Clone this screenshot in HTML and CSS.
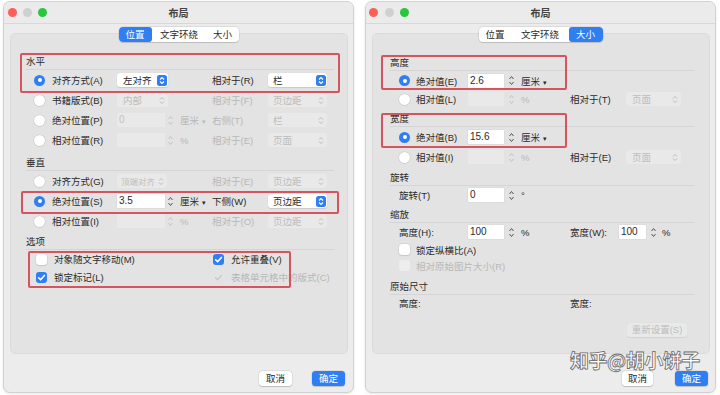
FILE: index.html
```html
<!DOCTYPE html>
<html lang="zh">
<head>
<meta charset="utf-8">
<link rel="stylesheet" href="styles.css">
</head>
<body>
<div class="desk">
  <!-- LEFT WINDOW -->
  <div class="win L">
    <div class="titlebar">
      <div class="lights"><span class="light red"></span><span class="light gray"></span><span class="light green"></span></div>
      <div class="title">布局</div>
      <div></div>
    </div>
    <div class="tabs-wrap">
      <div class="tabs"><span class="tab w33 on">位置</span><span class="tab w55">文字环绕</span><span class="tab w32">大小</span></div>
    </div>
    <div class="panel">
      <div class="hl hl-l1">
        <div class="sec">水平</div>
        <div class="row">
          <span class="radio on"></span><span>对齐方式(A)</span>
          <span class="sel"><span>左对齐</span><i class="sb"><svg width="10" height="11" viewBox="0 0 10 11"><path d="M3 4.5 5 2.5 7 4.5M3 6.5 5 8.5 7 6.5" fill="none" stroke="#fff" stroke-width="1.1"/></svg></i></span>
          <span></span>
          <span>相对于(R)</span>
          <span class="sel w59"><span>栏</span><i class="sb"><svg width="10" height="11" viewBox="0 0 10 11"><path d="M3 4.5 5 2.5 7 4.5M3 6.5 5 8.5 7 6.5" fill="none" stroke="#fff" stroke-width="1.1"/></svg></i></span>
        </div>
      </div>
      <div class="row">
        <span class="radio"></span><span>书籍版式(B)</span>
        <span class="sel dis"><span>内部</span><i class="sb"><svg width="10" height="11" viewBox="0 0 10 11"><path d="M3 4.5 5 2.5 7 4.5M3 6.5 5 8.5 7 6.5" fill="none" stroke="#bcbcbc" stroke-width="1"/></svg></i></span>
        <span></span>
        <span class="dis">相对于(F)</span>
        <span class="sel w59 dis"><span>页边距</span><i class="sb"><svg width="10" height="11" viewBox="0 0 10 11"><path d="M3 4.5 5 2.5 7 4.5M3 6.5 5 8.5 7 6.5" fill="none" stroke="#bcbcbc" stroke-width="1"/></svg></i></span>
      </div>
      <div class="row">
        <span class="radio"></span><span>绝对位置(P)</span>
        <span class="ctl"><span class="inp dis">0</span><svg class="step" width="7" height="13" viewBox="0 0 7 13"><path d="M1.5 5 3.5 2.5 5.5 5M1.5 8 3.5 10.5 5.5 8" fill="none" stroke="#c4c4c4" stroke-width="1"/></svg></span>
        <span class="dis">厘米 <small>▾</small></span>
        <span class="dis">右侧(T)</span>
        <span class="sel w59 dis"><span>栏</span><i class="sb"><svg width="10" height="11" viewBox="0 0 10 11"><path d="M3 4.5 5 2.5 7 4.5M3 6.5 5 8.5 7 6.5" fill="none" stroke="#bcbcbc" stroke-width="1"/></svg></i></span>
      </div>
      <div class="row">
        <span class="radio"></span><span>相对位置(R)</span>
        <span class="ctl"><span class="inp dis"></span><svg class="step" width="7" height="13" viewBox="0 0 7 13"><path d="M1.5 5 3.5 2.5 5.5 5M1.5 8 3.5 10.5 5.5 8" fill="none" stroke="#c4c4c4" stroke-width="1"/></svg></span>
        <span class="dis">%</span>
        <span class="dis">相对于(E)</span>
        <span class="sel w59 dis"><span>页面</span><i class="sb"><svg width="10" height="11" viewBox="0 0 10 11"><path d="M3 4.5 5 2.5 7 4.5M3 6.5 5 8.5 7 6.5" fill="none" stroke="#bcbcbc" stroke-width="1"/></svg></i></span>
      </div>

      <div class="sec mt6">垂直</div>
      <div class="row">
        <span class="radio"></span><span>对齐方式(G)</span>
        <span class="sel dis w50"><span class="fit">顶端对齐</span><i class="sb"><svg width="10" height="11" viewBox="0 0 10 11"><path d="M3 4.5 5 2.5 7 4.5M3 6.5 5 8.5 7 6.5" fill="none" stroke="#bcbcbc" stroke-width="1"/></svg></i></span>
        <span></span>
        <span class="dis">相对于(E)</span>
        <span class="sel w59 dis"><span>页边距</span><i class="sb"><svg width="10" height="11" viewBox="0 0 10 11"><path d="M3 4.5 5 2.5 7 4.5M3 6.5 5 8.5 7 6.5" fill="none" stroke="#bcbcbc" stroke-width="1"/></svg></i></span>
      </div>
      <div class="row hl hl-l2">
        <span class="radio on"></span><span>绝对位置(S)</span>
        <span class="ctl"><span class="inp">3.5</span><svg class="step" width="7" height="13" viewBox="0 0 7 13"><path d="M1.5 5 3.5 2.5 5.5 5M1.5 8 3.5 10.5 5.5 8" fill="none" stroke="#555" stroke-width="1"/></svg></span>
        <span>厘米 <small>▾</small></span>
        <span>下侧(W)</span>
        <span class="sel w59"><span>页边距</span><i class="sb"><svg width="10" height="11" viewBox="0 0 10 11"><path d="M3 4.5 5 2.5 7 4.5M3 6.5 5 8.5 7 6.5" fill="none" stroke="#fff" stroke-width="1.1"/></svg></i></span>
      </div>
      <div class="row">
        <span class="radio"></span><span>相对位置(I)</span>
        <span class="ctl"><span class="inp dis"></span><svg class="step" width="7" height="13" viewBox="0 0 7 13"><path d="M1.5 5 3.5 2.5 5.5 5M1.5 8 3.5 10.5 5.5 8" fill="none" stroke="#c4c4c4" stroke-width="1"/></svg></span>
        <span class="dis">%</span>
        <span class="dis">相对于(O)</span>
        <span class="sel w59 dis"><span>页边距</span><i class="sb"><svg width="10" height="11" viewBox="0 0 10 11"><path d="M3 4.5 5 2.5 7 4.5M3 6.5 5 8.5 7 6.5" fill="none" stroke="#bcbcbc" stroke-width="1"/></svg></i></span>
      </div>

      <div class="sec mt4">选项</div>
      <div class="opts hl hl-l3">
        <label class="ck"><span class="cb"></span>对象随文字移动(M)</label>
        <label class="ck"><span class="cb on"><svg width="11" height="11" viewBox="0 0 11 11"><path d="M2.6 5.8 4.6 7.8 8.4 3.4" fill="none" stroke="#fff" stroke-width="1.6" stroke-linecap="round" stroke-linejoin="round"/></svg></span>允许重叠(V)</label>
        <label class="ck"><span class="cb on"><svg width="11" height="11" viewBox="0 0 11 11"><path d="M2.6 5.8 4.6 7.8 8.4 3.4" fill="none" stroke="#fff" stroke-width="1.6" stroke-linecap="round" stroke-linejoin="round"/></svg></span>锁定标记(L)</label>
        <label class="ck dis"><span class="cb ghost"><svg width="11" height="11" viewBox="0 0 11 11"><path d="M2.6 5.8 4.6 7.8 8.4 3.4" fill="none" stroke="#c8c8c8" stroke-width="1.3" stroke-linecap="round" stroke-linejoin="round"/></svg></span>表格单元格中的版式(C)</label>
      </div>
    </div>
    <div class="footer">
      <span class="btn">取消</span><span class="btn primary">确定</span>
    </div>
  </div>

  <!-- RIGHT WINDOW -->
  <div class="win R">
    <div class="titlebar">
      <div class="lights"><span class="light red"></span><span class="light gray"></span><span class="light green"></span></div>
      <div class="title">布局</div>
      <div></div>
    </div>
    <div class="tabs-wrap">
      <div class="tabs"><span class="tab w33">位置</span><span class="tab w57">文字环绕</span><span class="tab w34 on">大小</span></div>
    </div>
    <div class="panel">
      <div class="hl hl-r1">
        <div class="sec">高度</div>
        <div class="row r19">
          <span class="radio on"></span><span>绝对值(E)</span>
          <span class="ctl"><span class="inp">2.6</span><svg class="step" width="7" height="13" viewBox="0 0 7 13"><path d="M1.5 5 3.5 2.5 5.5 5M1.5 8 3.5 10.5 5.5 8" fill="none" stroke="#555" stroke-width="1"/></svg></span>
          <span>厘米 <small>▾</small></span>
          <span></span><span></span>
        </div>
      </div>
      <div class="row r18">
        <span class="radio"></span><span>相对值(L)</span>
        <span class="ctl"><span class="inp dis"></span><svg class="step" width="7" height="13" viewBox="0 0 7 13"><path d="M1.5 5 3.5 2.5 5.5 5M1.5 8 3.5 10.5 5.5 8" fill="none" stroke="#c4c4c4" stroke-width="1"/></svg></span>
        <span class="dis">%</span>
        <span>相对于(T)</span>
        <span class="sel w55 dis"><span>页面</span><i class="sb"><svg width="10" height="11" viewBox="0 0 10 11"><path d="M3 4.5 5 2.5 7 4.5M3 6.5 5 8.5 7 6.5" fill="none" stroke="#bcbcbc" stroke-width="1"/></svg></i></span>
      </div>
      <div class="hl hl-r2 mt3">
        <div class="sec">宽度</div>
        <div class="row">
          <span class="radio on"></span><span>绝对值(B)</span>
          <span class="ctl"><span class="inp">15.6</span><svg class="step" width="7" height="13" viewBox="0 0 7 13"><path d="M1.5 5 3.5 2.5 5.5 5M1.5 8 3.5 10.5 5.5 8" fill="none" stroke="#555" stroke-width="1"/></svg></span>
          <span>厘米 <small>▾</small></span>
          <span></span><span></span>
        </div>
      </div>
      <div class="row">
        <span class="radio"></span><span>相对值(I)</span>
        <span class="ctl"><span class="inp dis"></span><svg class="step" width="7" height="13" viewBox="0 0 7 13"><path d="M1.5 5 3.5 2.5 5.5 5M1.5 8 3.5 10.5 5.5 8" fill="none" stroke="#c4c4c4" stroke-width="1"/></svg></span>
        <span class="dis">%</span>
        <span>相对于(E)</span>
        <span class="sel w55 dis"><span>页面</span><i class="sb"><svg width="10" height="11" viewBox="0 0 10 11"><path d="M3 4.5 5 2.5 7 4.5M3 6.5 5 8.5 7 6.5" fill="none" stroke="#bcbcbc" stroke-width="1"/></svg></i></span>
      </div>

      <div class="sec mt3">旋转</div>
      <div class="row r18">
        <span class="span2">旋转(T)</span>
        <span class="ctl"><span class="inp">0</span><svg class="step" width="7" height="13" viewBox="0 0 7 13"><path d="M1.5 5 3.5 2.5 5.5 5M1.5 8 3.5 10.5 5.5 8" fill="none" stroke="#555" stroke-width="1"/></svg></span>
        <span>°</span>
        <span></span><span></span>
      </div>

      <div class="sec mt3">缩放</div>
      <div class="row r18">
        <span class="span2">高度(H):</span>
        <span class="ctl"><span class="inp">100</span><svg class="step" width="7" height="13" viewBox="0 0 7 13"><path d="M1.5 5 3.5 2.5 5.5 5M1.5 8 3.5 10.5 5.5 8" fill="none" stroke="#555" stroke-width="1"/></svg></span>
        <span>%</span>
        <span class="span2 pair"><span class="plbl">宽度(W):</span><span class="inp w27">100</span><svg class="step" width="7" height="13" viewBox="0 0 7 13"><path d="M1.5 5 3.5 2.5 5.5 5M1.5 8 3.5 10.5 5.5 8" fill="none" stroke="#555" stroke-width="1"/></svg><span class="pct">%</span></span>
      </div>
      <div class="row r17">
        <span class="cb"></span><span class="span5">锁定纵横比(A)</span>
      </div>
      <div class="row r15">
        <span class="cb faint"></span><span class="span5 dis">相对原始图片大小(R)</span>
      </div>

      <div class="sec mt7 lh14">原始尺寸</div>
      <div class="row r16">
        <span class="span2">高度:</span><span></span><span></span>
        <span class="span2">宽度:</span>
      </div>
      <div class="reset-row"><span class="btn-dis">重新设置(S)</span></div>
    </div>
    <div class="footer">
      <span class="btn">取消</span><span class="btn primary">确定</span>
    </div>
  </div>
</div>
<div class="watermark">知乎@胡小饼子</div>
</body>
</html>
```
FILE: styles.css
```css
* { box-sizing: border-box; }
html, body { margin: 0; padding: 0; }
body {
  width: 720px;
  height: 395px;
  overflow: hidden;
  position: relative;
  background: #ffffff;
  font-family: "Liberation Sans", "Noto Sans CJK SC", sans-serif;
  font-size: 9.5px;
  color: #2a2a2a;
}
.desk { display: flex; gap: 11px; padding: 1px 0 0 3px; }

.win {
  width: 351px;
  height: 392px;
  background: #ececec;
  border: 1px solid #d2d2d2;
  border-radius: 7px;
  box-shadow: 0 1px 3px rgba(0,0,0,0.10);
  display: flex;
  flex-direction: column;
  overflow: hidden;
}
.titlebar {
  height: 22px;
  flex: none;
  display: grid;
  grid-template-columns: 1fr auto 1fr;
  align-items: center;
  border-bottom: 1px solid #d8d8d8;
  background: #ebebeb;
}
.lights { display: flex; gap: 6px; padding-left: 4px; }
.R .lights { padding-left: 3px; gap: 6.5px; }
.light { width: 9px; height: 9px; border-radius: 50%; }
.light.red { background: #fd5e57; }
.light.gray { background: #d0d0d0; }
.light.green { background: #2bc641; }
.title { font-size: 10px; font-weight: bold; color: #444; }

.tabs-wrap {
  display: flex;
  justify-content: center;
  margin-top: 3px;
  margin-bottom: -9px;
  position: relative;
  z-index: 1;
  height: 15px;
}
.tabs {
  display: flex;
  background: #fff;
  border-radius: 4px;
  box-shadow: 0 0 0 0.5px rgba(0,0,0,0.12), 0 0.5px 1px rgba(0,0,0,0.12);
  overflow: hidden;
}
.tab { line-height: 15px; text-align: center; color: #2a2a2a; }
.tab.on { background: #2f7ff2; color: #fff; border-radius: 3px; }
.w32 { width: 32px; } .w33 { width: 33px; } .w34 { width: 34px; }
.w55 { width: 55px; } .w57 { width: 57px; }

.panel {
  flex: none;
  height: 321px;
  margin: 0 5px 0 6px;
  background: #e3e3e3;
  border: 1px solid #dbdbdb;
  border-radius: 5px;
  padding: 21px 7px 0 11px;
}
.R .panel { padding: 21px 15px 0 10px; }

.sec {
  line-height: 14px;
  border-bottom: 1px solid #d5d5d5;
  margin: 0 6px 0 4px;
  color: #2a2a2a;
}
.R .sec { line-height: 15px; margin: 0 0 0 7px; }
.R .sec.lh14 { line-height: 14px; }
.mt3 { margin-top: 3px !important; }
.mt4 { margin-top: 4px !important; }
.mt6 { margin-top: 6px !important; }
.mt7 { margin-top: 7px !important; }

.row {
  display: grid;
  align-items: center;
  height: 20px;
  white-space: nowrap;
}
.L .row { grid-template-columns: 18px 65px 63px 32px 56px 59px; padding-left: 12px; }
.R .row { grid-template-columns: 17px 53px 52px 49px 56px 55px; padding-left: 16px; }
.R .row.r19 { height: 19px; }
.R .row.r18 { height: 18px; }
.R .row.r17 { height: 17px; }
.R .row.r16 { height: 16px; }
.R .row.r15 { height: 15px; }
.span2 { grid-column: span 2; }
.span5 { grid-column: span 5; }
small { font-size: 7px; }

.dis { color: #b8b8b8; }

/* highlight boxes (overlays) */
.hl { position: relative; }
.hl::after {
  content: "";
  position: absolute;
  border: 2px solid #d4545f;
  border-radius: 2px;
  pointer-events: none;
}
.hl-l1::after { top: -2px; bottom: -3px; left: -2px; right: 0; }
.hl-l2::after { top: 0; bottom: -3px; left: -1px; right: 1px; }
.hl-l3::after { top: 1px; bottom: -2px; left: 6px; width: 259px; }
.hl-r1::after { top: 0; bottom: 0; left: -2px; width: 182px; }
.hl-r2::after { top: 2px; bottom: -1px; left: -2px; width: 182px; }

/* radio */
.radio {
  width: 11px; height: 11px; border-radius: 50%;
  background: #fff;
  box-shadow: 0 0 0 0.5px rgba(0,0,0,0.12), 0 0.5px 1px rgba(0,0,0,0.1);
  display: flex; align-items: center; justify-content: center;
}
.radio.on { background: #2f7ff2; box-shadow: none; }
.radio.on::after { content: ""; width: 4px; height: 4px; border-radius: 50%; background: #fff; }

/* checkbox */
.cb {
  width: 11px; height: 11px; border-radius: 3px; flex: none;
  background: #fff;
  box-shadow: 0 0 0 0.5px rgba(0,0,0,0.1), 0 0.5px 1px rgba(0,0,0,0.08);
  display: flex;
}
.cb.on { background: #2f7ff2; box-shadow: none; }
.cb.ghost { background: transparent; box-shadow: none; }
.cb.faint { background: #ededed; box-shadow: none; }

/* inputs & selects */
.ctl { display: flex; align-items: center; gap: 2px; }
.R .ctl { gap: 4px; margin-left: -1px; }
.inp {
  width: 48px; height: 14px; line-height: 14px;
  background: #fff; border-radius: 1px;
  padding-left: 2px;
  box-shadow: 0 0 0 0.5px rgba(0,0,0,0.06);
  color: #2a2a2a;
  font-size: 10px;
}
.R .inp { width: 36px; }
.R .inp.w27 { width: 27px; }
.inp.dis { background: #e9e9e9; color: #c2c2c2; box-shadow: none; }
.step { display: block; flex: none; }

.sel {
  width: 51px; height: 14px;
  background: #fff; border-radius: 3px;
  display: flex; align-items: center; justify-content: space-between;
  padding: 0 1px 0 6px;
  box-shadow: 0 0.5px 1px rgba(0,0,0,0.12);
}
.sel.w50 { width: 50px; padding-left: 4px; }
.sel.w55 { width: 55px; }
.sel.w59 { width: 59px; padding-left: 5px; }
.sel .sb {
  width: 10px; height: 11px; border-radius: 2.5px;
  background: #2f7ff2; display: flex; flex: none;
}
.sel.dis { background: #e9e9e9; color: #bcbcbc; box-shadow: none; }
.sel.dis .sb { background: transparent; }
.fit { font-size: 8.5px; white-space: nowrap; }

.pair { display: flex; align-items: center; }
.plbl { width: 49px; }
.pair .step { margin-left: 4px; }
.pct { margin-left: 5px; }

/* options */
.opts { display: grid; grid-template-columns: 177px 1fr; padding-left: 14px; }
.ck { display: flex; align-items: center; gap: 7px; height: 18px; white-space: nowrap; }

.reset-row { display: flex; justify-content: flex-end; padding-right: 7px; margin-top: 12px; }
.btn-dis {
  width: 60px; height: 14px; line-height: 14px; text-align: center;
  background: #e9e9e9; color: #bdbdbd; border-radius: 3px;
  box-shadow: 0 0.5px 1px rgba(0,0,0,0.08);
}

/* footer */
.footer { display: flex; justify-content: flex-end; gap: 20px; margin-top: 17px; padding-right: 8px; }
.R .footer { gap: 22px; padding-right: 7px; }
.btn {
  width: 33px; height: 15px; line-height: 15px; text-align: center;
  background: #fff; border-radius: 3.5px;
  box-shadow: 0 0 0 0.5px rgba(0,0,0,0.1), 0 0.5px 1px rgba(0,0,0,0.15);
}
.R .btn { width: 31px; }
.R .btn.primary { width: 33px; }
.btn.primary { background: #2f7ff2; color: #fff; }

.watermark {
  position: absolute;
  left: 570px;
  top: 346px;
  font-size: 19px;
  letter-spacing: -0.5px;
  color: #fff;
  -webkit-text-stroke: 0.8px #6a6a6a;
  font-family: "Noto Sans CJK SC", sans-serif;
  font-weight: bold;
  white-space: nowrap;
}
```
